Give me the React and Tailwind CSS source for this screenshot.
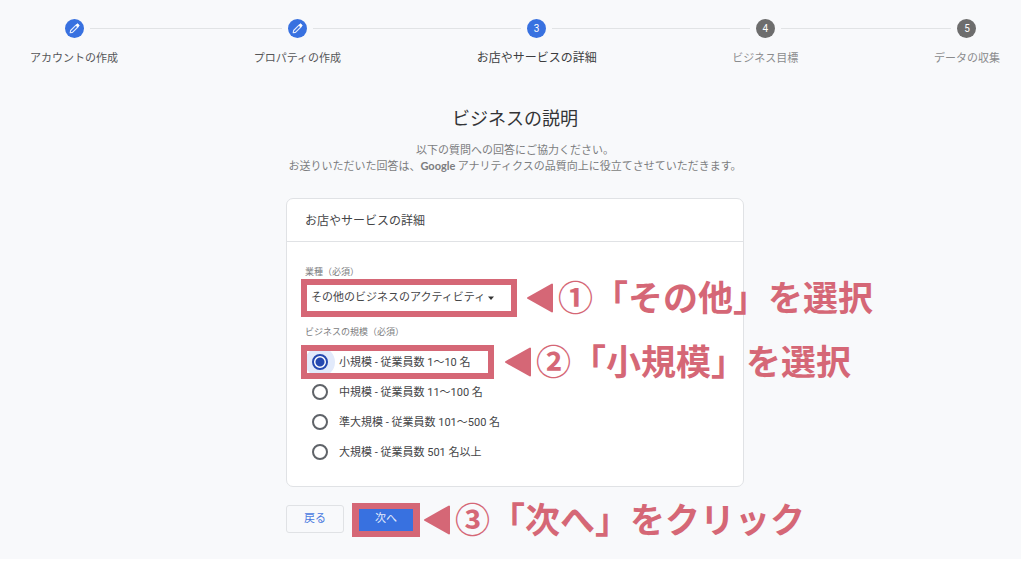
import React from 'react';

const steps = [
  { label: 'アカウントの作成', state: 'done' },
  { label: 'プロパティの作成', state: 'done' },
  { label: 'お店やサービスの詳細', state: 'current' },
  { label: 'ビジネス目標', state: 'todo' },
  { label: 'データの収集', state: 'todo' },
];

const labelStyle = {
  done: 'text-[11px] text-[#555658]',
  current: 'text-[12px] text-[#3c3d3f]',
  todo: 'text-[11px] text-[#8a8b8d]',
};

const badgeStyle = {
  done: 'bg-[#3871e0]',
  current: 'bg-[#3871e0]',
  todo: 'bg-[#6d6d6d]',
};

const sizes = [
  '小規模 - 従業員数 1～10 名',
  '中規模 - 従業員数 11～100 名',
  '準大規模 - 従業員数 101～500 名',
  '大規模 - 従業員数 501 名以上',
];

function Pencil() {
  return (
    <svg viewBox="0 0 19 19" className="size-[19px]" fill="none" aria-hidden="true">
      <path
        d="M5.2 13.8 L5.6 11.5 L11 6.1 L12.9 8 L7.5 13.4 Z"
        stroke="#e4ecfc"
        strokeWidth="1.1"
        strokeLinejoin="round"
      />
      <path
        d="M11 6.1 L12 5.1 Q12.5 4.6 13 5.1 L13.9 6 Q14.4 6.5 13.9 7 L12.9 8 Z"
        fill="#fff"
        stroke="#fff"
        strokeWidth="0.8"
        strokeLinejoin="round"
      />
    </svg>
  );
}

function Line() {
  return <span className="h-px flex-1 bg-[#e1e3e5]" />;
}

function Step({ step, index, last }) {
  return (
    <>
      <li className="flex shrink-0 flex-col gap-[11px]">
        <div className="flex items-center gap-[6px]">
          {index > 0 ? <Line /> : <span className="flex-1" />}
          <span
            className={`flex size-[19px] items-center justify-center rounded-full font-['Roboto'] text-[10px] leading-none text-white ${badgeStyle[step.state]}`}
          >
            {step.state === 'done' ? <Pencil /> : index + 1}
          </span>
          {last ? <span className="flex-1" /> : <Line />}
        </div>
        <span className={`whitespace-nowrap leading-4 ${labelStyle[step.state]}`}>{step.label}</span>
      </li>
      {!last && <li aria-hidden="true" className="mt-[9px] h-px flex-1 bg-[#e1e3e5]" />}
    </>
  );
}

function Callout({ number, children }) {
  return (
    <span className="flex h-8 items-center whitespace-nowrap text-[35px] leading-[32px] font-bold text-[#d56776]">
      <svg viewBox="0 0 35 32" className="h-8 w-[35px]" fill="currentColor" aria-hidden="true">
        <path
          d="M5 16 L29 2.5 V29.5 Z"
          stroke="currentColor"
          strokeWidth="2"
          strokeLinejoin="round"
        />
      </svg>
      <span className="pb-1">
        {number}
        {children}
      </span>
    </span>
  );
}

export default function App() {
  return (
    <div className="bg-white pr-[3px] pb-[2px] font-['Noto_Sans_CJK_JP','Roboto',sans-serif]">
      <div className="bg-[#f8f9fb] pt-[19px] pr-[21px] pb-[26px] pl-[30px]">
        <ol className="flex items-start">
          {steps.map((step, i) => (
            <Step key={step.label} step={step} index={i} last={i === steps.length - 1} />
          ))}
        </ol>

        <main className="mx-auto mt-10 max-w-[458px]">
          <h1 className="text-center text-[18px] leading-6 text-[#333436]">ビジネスの説明</h1>
          <p className="mt-3 text-center text-[11px] leading-4 whitespace-nowrap text-[#7c7d80]">
            以下の質問への回答にご協力ください。
            <br />
            お送りいただいた回答は、
            <span className="font-['Lato'] font-bold">Google</span>{' '}
            アナリティクスの品質向上に役立てさせていただきます。
          </p>

          <form onSubmit={(e) => e.preventDefault()}>
            <section className="mt-6 rounded-[7px] border border-[#e0e2e5] bg-white">
              <h2 className="border-b border-[#e0e2e5] px-[18px] py-3 text-[12px] leading-[18px] text-[#444547]">
                お店やサービスの詳細
              </h2>
              <div className="px-[18px] pt-[23px] pb-[19px]">
                <label htmlFor="industry" className="block text-[9px] leading-[14px] text-[#7c7d80]">
                  業種（必須）
                </label>
                <div className="relative flex h-[38px] items-center">
                  <select
                    id="industry"
                    className="h-6 w-[190px] appearance-none bg-white pl-[6px] font-['Roboto','Noto_Sans_CJK_JP',sans-serif] text-[11px] text-[#444547]"
                  >
                    <option>その他のビジネスのアクティビティ</option>
                  </select>
                  <svg viewBox="0 0 8 8" className="pointer-events-none -ml-2 size-2" fill="#333" aria-hidden="true">
                    <path d="M1 2.5 H7 L4 6 Z" />
                  </svg>
                  <div className="pointer-events-none absolute inset-y-0 -left-1 flex items-center">
                    <span className="h-[38px] w-[216px] border-[6px] border-[#d56776]" />
                    <span className="ml-[6px]">
                      <Callout number="①">「その他」を選択</Callout>
                    </span>
                  </div>
                </div>

                <fieldset className="mt-2">
                  <legend className="text-[9px] leading-[14px] text-[#7c7d80]">
                    ビジネスの規模（必須）
                  </legend>
                  <div className="relative mt-2">
                    {sizes.map((size, i) => (
                      <label
                        key={size}
                        className="flex h-[30px] items-center font-['Roboto','Noto_Sans_CJK_JP',sans-serif] text-[11px] text-[#444547]"
                      >
                        <span
                          className={`flex size-[30px] items-center justify-center rounded-full ${i === 0 ? 'bg-[#e2eafb]' : ''}`}
                        >
                          <input
                            type="radio"
                            name="size"
                            defaultChecked={i === 0}
                            className="size-4 appearance-none rounded-full border-2 border-[#5f6368] checked:border-[#2549b0] checked:bg-[radial-gradient(circle,#2549b0_4px,white_5px)]"
                          />
                        </span>
                        <span className="ml-1 pt-[2px]">{size}</span>
                      </label>
                    ))}
                    <div className="pointer-events-none absolute -top-[2px] -left-1 flex items-center">
                      <span className="h-[34px] w-[193px] border-[6px] border-[#d56776]" />
                      <span className="ml-[7px]">
                        <Callout number="②">「小規模」を選択</Callout>
                      </span>
                    </div>
                  </div>
                </fieldset>
              </div>
            </section>

            <div className="mt-[18px] flex gap-[13px] font-['Roboto','Noto_Sans_CJK_JP',sans-serif]">
              <button
                type="button"
                className="h-7 w-[58px] rounded-[3px] border border-[#e0e2e5] text-[11px] text-[#4a7ae0]"
              >
                戻る
              </button>
              <div className="relative">
                <button
                  type="submit"
                  className="h-7 w-[58px] rounded-[3px] bg-[#3871e0] text-[11px] text-[#e4ecfc]"
                >
                  次へ
                </button>
                <div className="pointer-events-none absolute -top-[2px] -left-[5px] flex items-center font-['Noto_Sans_CJK_JP',sans-serif]">
                  <span className="h-[34px] w-[68px] border-x-[7px] border-y-[6px] border-[#d56776]" />
                  <Callout number="③">「次へ」をクリック</Callout>
                </div>
              </div>
            </div>
          </form>
        </main>
      </div>
    </div>
  );
}
